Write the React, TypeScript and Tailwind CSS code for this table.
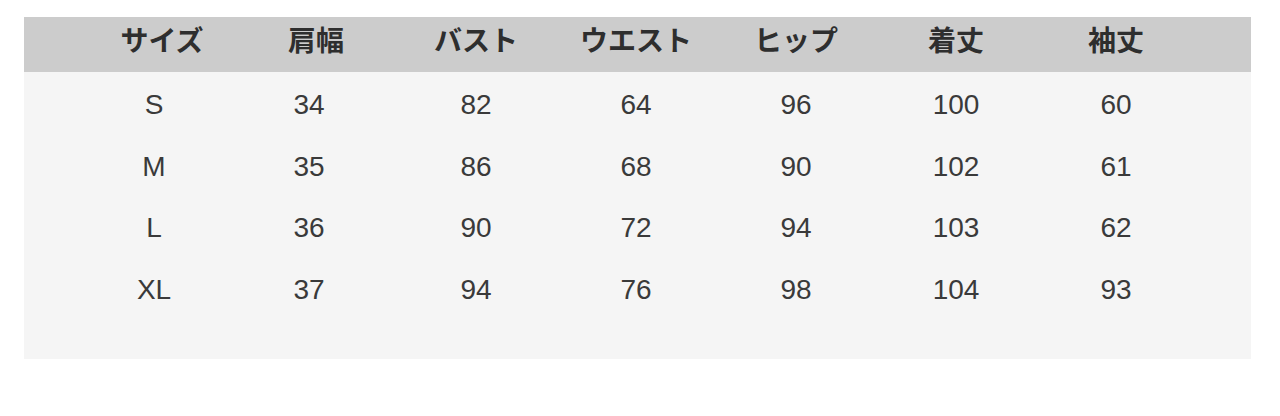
import React from "react";

const headers = ["サイズ", "肩幅", "バスト", "ウエスト", "ヒップ", "着丈", "袖丈"];
const rows = [
  ["S", "34", "82", "64", "96", "100", "60"],
  ["M", "35", "86", "68", "90", "102", "61"],
  ["L", "36", "90", "72", "94", "103", "62"],
  ["XL", "37", "94", "76", "98", "104", "93"],
];

const headPad = ["pl-[12px]", "", "", "", "", "", ""];
const dataPad = ["pr-[4px]", "pr-[14px]", "", "", "", "", ""];

export default function App() {
  return (
    <div className="w-[1280px] h-[416px] bg-white pt-[17px] pl-[24px]">
      <div className="w-[1227px]">
        <div className="h-[55px] bg-[#cccccc] pl-[52px] pt-[8px] grid grid-cols-[repeat(7,160px)]">
          {headers.map((h, i) => (
            <div
              key={h}
              className={`text-center font-bold text-[28px] leading-[28px] text-[#2e2e2e] ${headPad[i]}`}
              style={{ fontFamily: '"Noto Sans CJK JP", sans-serif' }}
            >
              {h}
            </div>
          ))}
        </div>
        <div className="h-[287px] bg-[#f5f5f5] pl-[52px] pt-[2px]">
          {rows.map((r, ri) => (
            <div key={ri} className="grid grid-cols-[repeat(7,160px)]">
              {r.map((c, i) => (
                <div
                  key={i}
                  className={`text-center text-[28px] leading-[61.7px] text-[#3a3a3a] ${dataPad[i]}`}
                  style={{ fontFamily: '"Liberation Sans", Arial, sans-serif' }}
                >
                  {c}
                </div>
              ))}
            </div>
          ))}
        </div>
      </div>
    </div>
  );
}
